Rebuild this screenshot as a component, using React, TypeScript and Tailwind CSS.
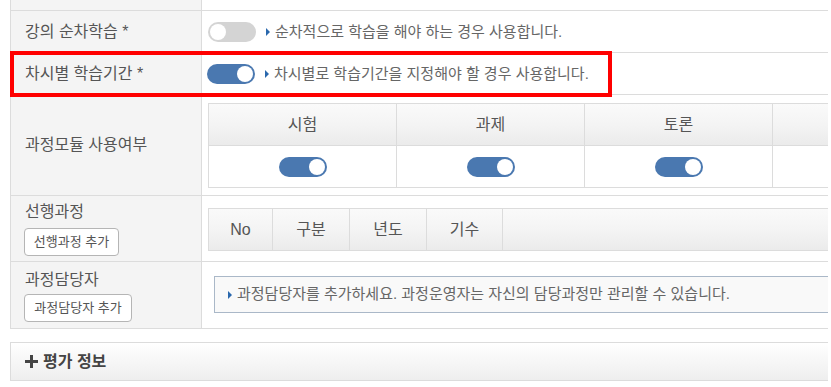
const font = {
  fontFamily: '"Liberation Sans", "Noto Sans CJK KR", sans-serif',
};

const Toggle = ({ on }: { on: boolean }) => (
  <div
    className={`w-[48px] h-[20px] rounded-full flex items-center px-[2px] ${
      on ? "bg-[#4a78b0] justify-end" : "bg-[#d4d4d4] justify-start"
    }`}
  >
    <div className="w-[16px] h-[16px] rounded-full bg-white" />
  </div>
);

const Arrow = () => (
  <span className="inline-block w-0 h-0 border-l-[4px] border-l-[#2a68ad] border-y-[4px] border-y-transparent" />
);

const Hint = ({ children }: { children: string }) => (
  <div className="flex items-center gap-[5px] ml-[10px] text-[15px] leading-[20px] text-[#666]">
    <Arrow />
    <span>{children}</span>
  </div>
);

const Label = ({ children }: { children: string }) => (
  <div className="w-[191px] shrink-0 bg-[#f4f4f4] border-r border-[#dcdcdc] pl-[14px] flex items-center text-[16px] leading-[20px] text-[#555]">
    {children}
  </div>
);

const SmallButton = ({ children, w }: { children: string; w: string }) => (
  <button
    className={`${w} h-[28px] rounded-[4px] border border-[#b5b5b5] bg-white text-[13px] leading-[18px] text-[#555]`}
  >
    {children}
  </button>
);

const headCell =
  "shrink-0 h-full flex items-center justify-center border-r border-[#dcdcdc] bg-linear-to-b from-[#fafafa] via-[#f4f4f4] to-[#ebebeb] text-[16px] text-[#555]";

export default function App() {
  const modules = ["시험", "과제", "토론", ""];
  const prereq = [
    { t: "No", w: "w-[64px]" },
    { t: "구분", w: "w-[77px]" },
    { t: "년도", w: "w-[77px]" },
    { t: "기수", w: "w-[76px]" },
  ];

  return (
    <div className="w-[831px] h-[387px] bg-white overflow-hidden" style={font}>
      <div className="relative ml-[10px] w-[818px]">
        <div className="border-l border-[#dcdcdc] overflow-hidden">
          {/* top row (cut) */}
          <div className="h-[11px] flex border-b border-[#dcdcdc]">
            <div className="w-[191px] bg-[#f4f4f4] border-r border-[#dcdcdc]" />
          </div>

          <div className="h-[42px] flex border-b border-[#dcdcdc]">
            <Label>강의 순차학습 *</Label>
            <div className="flex items-center pl-[6px]">
              <Toggle on={false} />
              <Hint>순차적으로 학습을 해야 하는 경우 사용합니다.</Hint>
            </div>
          </div>

          <div className="h-[42px] flex border-b border-[#dcdcdc]">
            <Label>차시별 학습기간 *</Label>
            <div className="flex items-center pl-[5px]">
              <Toggle on={true} />
              <Hint>차시별로 학습기간을 지정해야 할 경우 사용합니다.</Hint>
            </div>
          </div>

          <div className="h-[101px] flex border-b border-[#dcdcdc]">
            <Label>과정모듈 사용여부</Label>
            <div className="flex-1 pl-[6px] pt-[8px] overflow-hidden">
              <div className="w-[760px] border border-[#dcdcdc] border-r-0">
                <div className="h-[42px] flex border-b border-[#dcdcdc]">
                  {modules.map((m, i) => (
                    <div key={i} className={`${headCell} w-[188px]`}>
                      {m}
                    </div>
                  ))}
                </div>
                <div className="h-[41px] flex bg-white">
                  {modules.map((m, i) => (
                    <div
                      key={i}
                      className="w-[188px] shrink-0 flex items-center justify-center border-r border-[#dcdcdc]"
                    >
                      {m && <Toggle on={true} />}
                    </div>
                  ))}
                </div>
              </div>
            </div>
          </div>

          <div className="h-[66px] flex border-b border-[#dcdcdc]">
            <div className="w-[191px] shrink-0 bg-[#f4f4f4] border-r border-[#dcdcdc] pl-[13px] pt-[6px] text-[16px] leading-[20px] text-[#555]">
              <div className="pl-[1px]">선행과정</div>
              <div className="mt-[6px]">
                <SmallButton w="w-[95px]">선행과정 추가</SmallButton>
              </div>
            </div>
            <div className="flex-1 pl-[6px] pt-[12px] overflow-hidden">
              <div className="h-[43px] flex border border-[#dcdcdc] border-r-0 bg-linear-to-b from-[#fafafa] via-[#f4f4f4] to-[#ebebeb]">
                {prereq.map((c) => (
                  <div key={c.t} className={`${headCell} ${c.w}`}>
                    {c.t}
                  </div>
                ))}
              </div>
            </div>
          </div>

          <div className="h-[67px] flex border-b border-[#dcdcdc]">
            <div className="w-[191px] shrink-0 bg-[#f4f4f4] border-r border-[#dcdcdc] pl-[13px] pt-[8px] text-[16px] leading-[20px] text-[#555]">
              <div className="pl-[1px]">과정담당자</div>
              <div className="mt-[4px]">
                <SmallButton w="w-[108px]">과정담당자 추가</SmallButton>
              </div>
            </div>
            <div className="flex-1 pl-[12px] pt-[14px] overflow-hidden">
              <div className="h-[37px] w-[700px] flex items-center gap-[5px] pl-[13px] border border-[#aab8c8] border-r-0 bg-[#f9f9f9] text-[15px] text-[#666]">
                <Arrow />
                <span className="whitespace-nowrap">
                  과정담당자를 추가하세요. 과정운영자는 자신의 담당과정만 관리할 수 있습니다.
                </span>
              </div>
            </div>
          </div>
        </div>

        {/* 평가 정보 panel */}
        <div className="mt-[13px] h-[39px] flex items-center gap-[5px] pl-[14px] border border-[#dcdcdc] border-r-0 bg-linear-to-b from-white to-[#eeeeee] text-[16px] font-bold text-[#444]">
          <svg width="13" height="13" viewBox="0 0 13 13">
            <rect x="5" y="0" width="3" height="13" fill="#444" />
            <rect x="0" y="5" width="13" height="3" fill="#444" />
          </svg>
          <span>평가 정보</span>
        </div>

        {/* highlight box */}
        <div className="absolute left-0 top-[51px] w-[602px] h-[46px] border-4 border-[#ff0000] pointer-events-none" />
      </div>
    </div>
  );
}
